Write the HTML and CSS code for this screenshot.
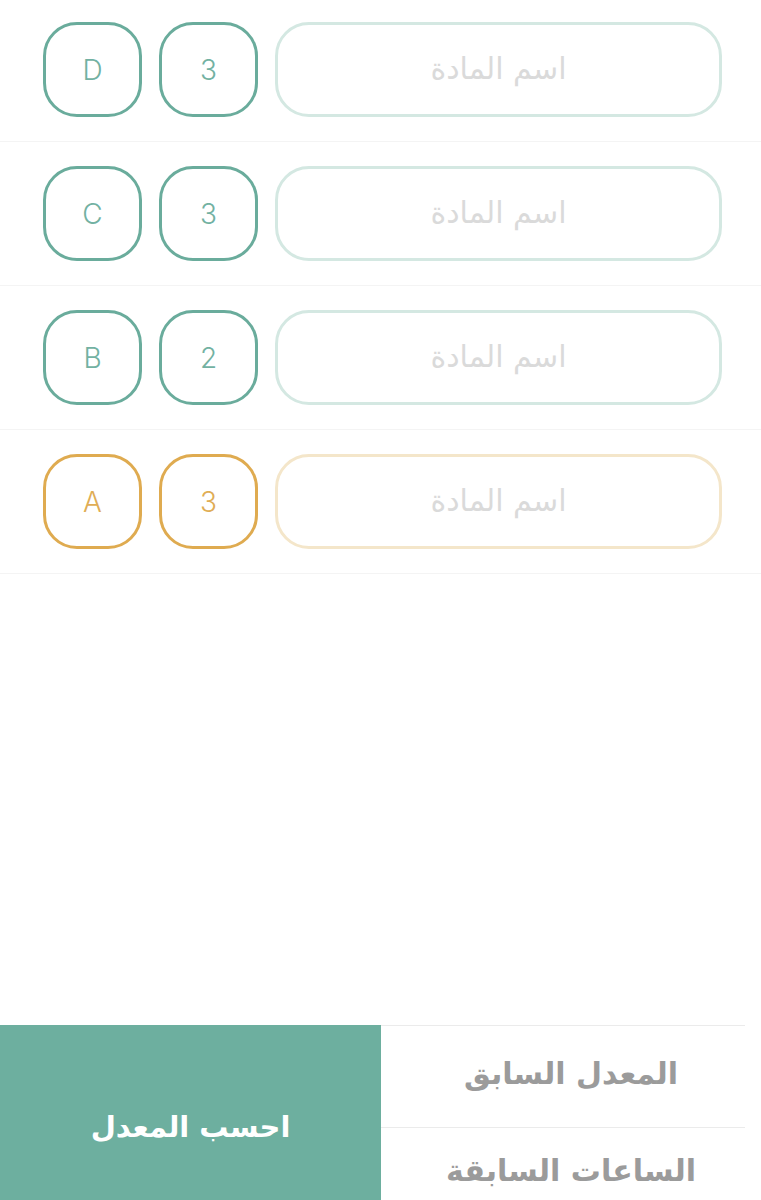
FILE: index.html
```html
<!DOCTYPE html>
<html lang="ar" dir="rtl">
<head>
<meta charset="utf-8">
<link rel="stylesheet" href="styles.css">
</head>
<body>
<div class="page">
  <div class="list">
    <div class="row">
      <div class="name">اسم المادة</div>
      <div class="chip">3</div>
      <div class="chip">D</div>
    </div>
    <div class="row">
      <div class="name">اسم المادة</div>
      <div class="chip">3</div>
      <div class="chip">C</div>
    </div>
    <div class="row">
      <div class="name">اسم المادة</div>
      <div class="chip">2</div>
      <div class="chip">B</div>
    </div>
    <div class="row gold">
      <div class="name">اسم المادة</div>
      <div class="chip">3</div>
      <div class="chip">A</div>
    </div>
  </div>
  <div class="footer">
    <div class="prev">
      <div class="prev-item">المعدل السابق</div>
      <div class="prev-item">الساعات السابقة</div>
    </div>
    <div class="calc">احسب المعدل</div>
  </div>
</div>
</body>
</html>
```

FILE: styles.css
```css
html, body {
  margin: 0;
  padding: 0;
  background: #ffffff;
}
body {
  font-family: "DejaVu Sans", "Noto Sans", sans-serif;
  overflow: hidden;
}
.page {
  width: 761px;
  height: 1200px;
  overflow: hidden;
}
.list {
  display: flex;
  flex-direction: column;
}
.row {
  display: flex;
  align-items: center;
  gap: 17px;
  padding: 24px 39px 24px 43px;
  border-bottom: 1px solid #f4f4f4;
}
.row:first-child {
  padding-top: 22px;
}
.name {
  flex: 1;
  height: 95px;
  box-sizing: border-box;
  border: 3.5px solid #d4e8e2;
  border-radius: 34px;
  display: flex;
  align-items: center;
  justify-content: center;
  color: #dadada;
  font-size: 30px;
  padding-bottom: 2px;
}
.chip {
  width: 99px;
  height: 95px;
  box-sizing: border-box;
  border: 3.5px solid #6aac9c;
  border-radius: 34px;
  display: flex;
  align-items: center;
  justify-content: center;
  color: #72b1a2;
  font-family: "Inter", "Roboto", sans-serif;
  font-weight: 300;
  font-size: 28px;
}
.gold .chip {
  border-color: #dfab50;
  color: #e0ad55;
}
.gold .name {
  border-color: #f4e6ca;
}
.footer {
  margin-top: 451px;
  display: flex;
  height: 204px;
}
.prev {
  width: 380px;
  display: flex;
  flex-direction: column;
}
.prev-item {
  height: 102px;
  display: flex;
  align-items: center;
  justify-content: center;
  color: #9b9b9b;
  font-weight: bold;
  font-size: 30px;
  box-sizing: border-box;
  padding-top: 1px;
  padding-bottom: 6px;
  background: linear-gradient(#ebebeb, #ebebeb) no-repeat left top / calc(100% - 16px) 1px;
}
.prev-item + .prev-item {
  padding-bottom: 16px;
}
.calc {
  width: 381px;
  background: #6daf9f;
  color: #ffffff;
  font-weight: bold;
  font-size: 29px;
  display: flex;
  align-items: center;
  justify-content: center;
}
```
